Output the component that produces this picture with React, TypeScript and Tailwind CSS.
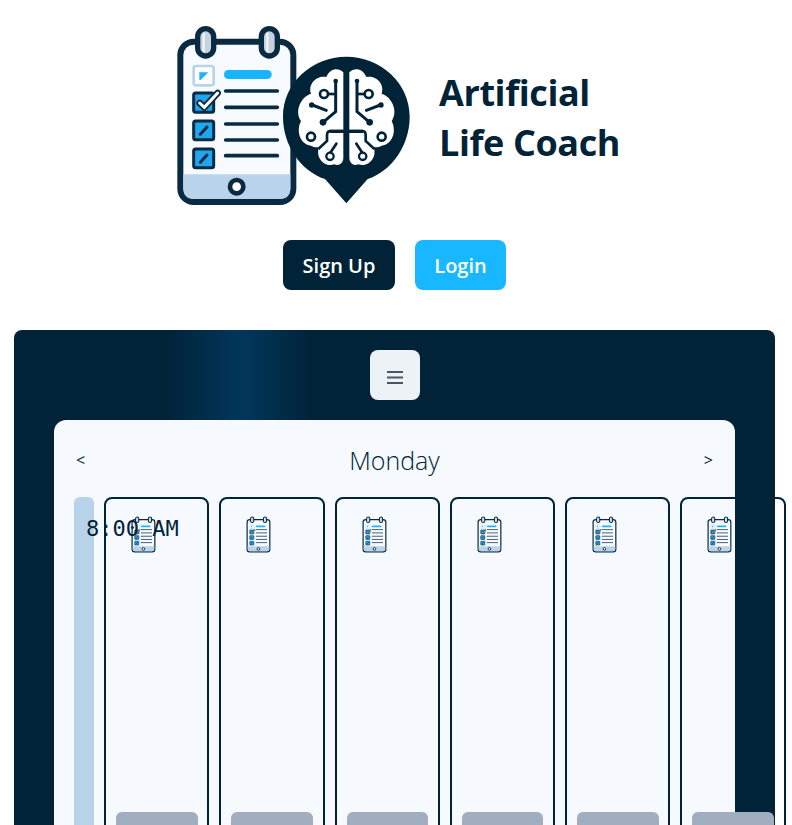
import React from 'react';

const DARK = '#012338';

function ClipboardShapes() {
  return (
    <g>
      <rect x="34" y="80" width="339" height="481" rx="40" fill="#f7fbff" stroke="#0a2a42" strokeWidth="18"/>
      <path d="M43 478H364V520Q364 552 332 552H75Q43 552 43 520Z" fill="#b9d3ea"/>
      <rect x="86" y="41" width="48" height="82" rx="24" fill="#c5d3df" stroke="#0a2a42" strokeWidth="16"/>
      <rect x="277" y="41" width="48" height="82" rx="24" fill="#c5d3df" stroke="#0a2a42" strokeWidth="16"/>
      <path d="M104 56V108M295 56V108" stroke="#eef4f9" strokeWidth="7" strokeLinecap="round"/>
      <rect x="74" y="153" width="60" height="58" rx="6" fill="#fff" stroke="#b9d3ea" strokeWidth="8"/>
      <path d="M91 172H118L95 195H91Z" fill="#18b4ff"/>
      <rect x="165" y="165" width="143" height="27" rx="13" fill="#18b4ff"/>
      <path d="M170 228H325M170 277H325M170 327H325M170 375H325M170 422H325" stroke="#0a2a42" strokeWidth="11" strokeLinecap="round"/>
      <rect x="74" y="234" width="60" height="58" rx="6" fill="#1ea6ee" stroke="#0a2a42" strokeWidth="9"/>
      <path d="M92 264L106 277L146 234" fill="none" stroke="#0a2a42" strokeWidth="20" strokeLinecap="round"/>
      <path d="M92 264L106 277L146 234" fill="none" stroke="#fff" strokeWidth="9" strokeLinecap="round"/>
      <rect x="74" y="318" width="60" height="56" rx="6" fill="#1ea6ee" stroke="#0a2a42" strokeWidth="9"/>
      <path d="M94 358L114 336" stroke="#0a2a42" strokeWidth="9" strokeLinecap="round"/>
      <rect x="74" y="402" width="60" height="56" rx="6" fill="#1ea6ee" stroke="#0a2a42" strokeWidth="9"/>
      <path d="M94 442L114 420" stroke="#0a2a42" strokeWidth="9" strokeLinecap="round"/>
      <circle cx="203" cy="515" r="20" fill="#fff" stroke="#0a2a42" strokeWidth="14"/>
    </g>
  );
}

function BrainHalf() {
  return (
    <g>
      <path d="M523 172C508 156 482 160 472 186C444 180 416 206 426 236C394 246 376 290 396 318C380 350 394 388 426 392C434 396 444 398 450 396C438 432 470 458 496 448C510 454 523 444 523 428V354H482V344H523Z" fill="#fff"/>
      <path d="M500 198V290L462 322" fill="none" stroke={DARK} strokeWidth="9" strokeLinecap="round"/>
      <circle cx="500" cy="198" r="7" fill={DARK}/>
      <circle cx="462" cy="322" r="10" fill={DARK}/>
      <circle cx="465" cy="237" r="12" fill="#fff" stroke={DARK} strokeWidth="8"/>
      <path d="M477 237H500" stroke={DARK} strokeWidth="8"/>
      <path d="M430 270L472 286" stroke={DARK} strokeWidth="9" strokeLinecap="round"/>
      <circle cx="428" cy="270" r="8" fill={DARK}/>
      <circle cx="426" cy="365" r="12" fill="#fff" stroke={DARK} strokeWidth="8"/>
      <path d="M522 348H485Q474 348 474 360V378L448 402" fill="none" stroke={DARK} strokeWidth="8"/>
      <circle cx="483" cy="424" r="11" fill="#fff" stroke={DARK} strokeWidth="7"/>
      <path d="M485 412L502 386" stroke={DARK} strokeWidth="8" strokeLinecap="round"/>
    </g>
  );
}

function Logo() {
  return (
    <svg viewBox="0 0 750 600" className="w-[250px] h-[200px]">
      <ClipboardShapes/>
      <path d="M532 565L468 492C396 468 342 392 342 305C342 205 428 125 532 125C636 125 722 205 722 305C722 392 668 468 596 492Z" fill={DARK}/>
      <BrainHalf/>
      <g transform="translate(1064 0) scale(-1 1)">
        <BrainHalf/>
      </g>
    </svg>
  );
}

function DayColumn() {
  return (
    <div className="w-[105.25px] h-[400px] shrink-0 border-2 border-[#012338] rounded-lg flex flex-col">
      <svg viewBox="20 25 368 552" className="w-[25px] h-[37px] mt-[17px] ml-[25px]">
        <ClipboardShapes/>
      </svg>
      <div className="mt-[259px] ml-[10px] w-[81.5px] h-[40px] bg-[#a0aec0] rounded-md"/>
    </div>
  );
}

function App() {
  return (
    <div className="h-[825px] overflow-hidden bg-white font-['Open_Sans',sans-serif] text-[#012338]">
      <div className="flex justify-center items-center pt-[15px] pl-[16px]">
        <Logo/>
        <h1 className="ml-[20px] pt-[6px] text-[36px] leading-[50px] font-bold tracking-[-0.4px] w-[200px]">Artificial<br/>Life Coach</h1>
      </div>
      <div className="flex justify-center gap-5 mt-[25px] pr-[3px]">
        <button className="h-[50px] w-[112px] pt-[2px] rounded-lg bg-[#012338] text-white text-xl font-semibold">Sign Up</button>
        <button className="h-[50px] w-[91px] pt-[2px] rounded-lg bg-[#18b7ff] text-white text-xl font-semibold">Login</button>
      </div>
      <div className="mt-10 ml-[14px] w-[761px] rounded-t-lg px-10 pt-5 pb-10 bg-[linear-gradient(to_right,#012338_20%,#01375c_30%,#012338_39%)]">
        <div className="flex justify-center">
          <button className="w-[50px] h-[50px] pt-1 rounded-lg bg-[#edf2f7] flex items-center justify-center">
            <svg viewBox="0 0 16 13" className="w-4 h-[13px]">
              <path d="M0 1H16M0 6.5H16M0 12H16" stroke="#4a5568" strokeWidth="2"/>
            </svg>
          </button>
        </div>
        <div className="mt-5 w-[681px] bg-[#f6fafe] rounded-t-xl px-5 pt-6 pb-5 h-[500px]">
          <div className="flex items-center justify-between px-[2px]">
            <span className="text-base">&lt;</span>
            <span className="text-[25px] leading-8 font-light text-[#012338]">Monday</span>
            <span className="text-base">&gt;</span>
          </div>
          <div className="flex gap-[10px] mt-[21px]">
            <div className="relative w-5 h-[400px] shrink-0 bg-[#b9d3ea] rounded-t-md">
              <span className="absolute left-3 top-[18px] whitespace-nowrap font-['DejaVu_Sans_Mono',monospace] text-[22px] leading-[28px]">8:00 AM</span>
            </div>
            <DayColumn/><DayColumn/><DayColumn/><DayColumn/><DayColumn/><DayColumn/>
          </div>
        </div>
      </div>
    </div>
  );
}

export default App;
